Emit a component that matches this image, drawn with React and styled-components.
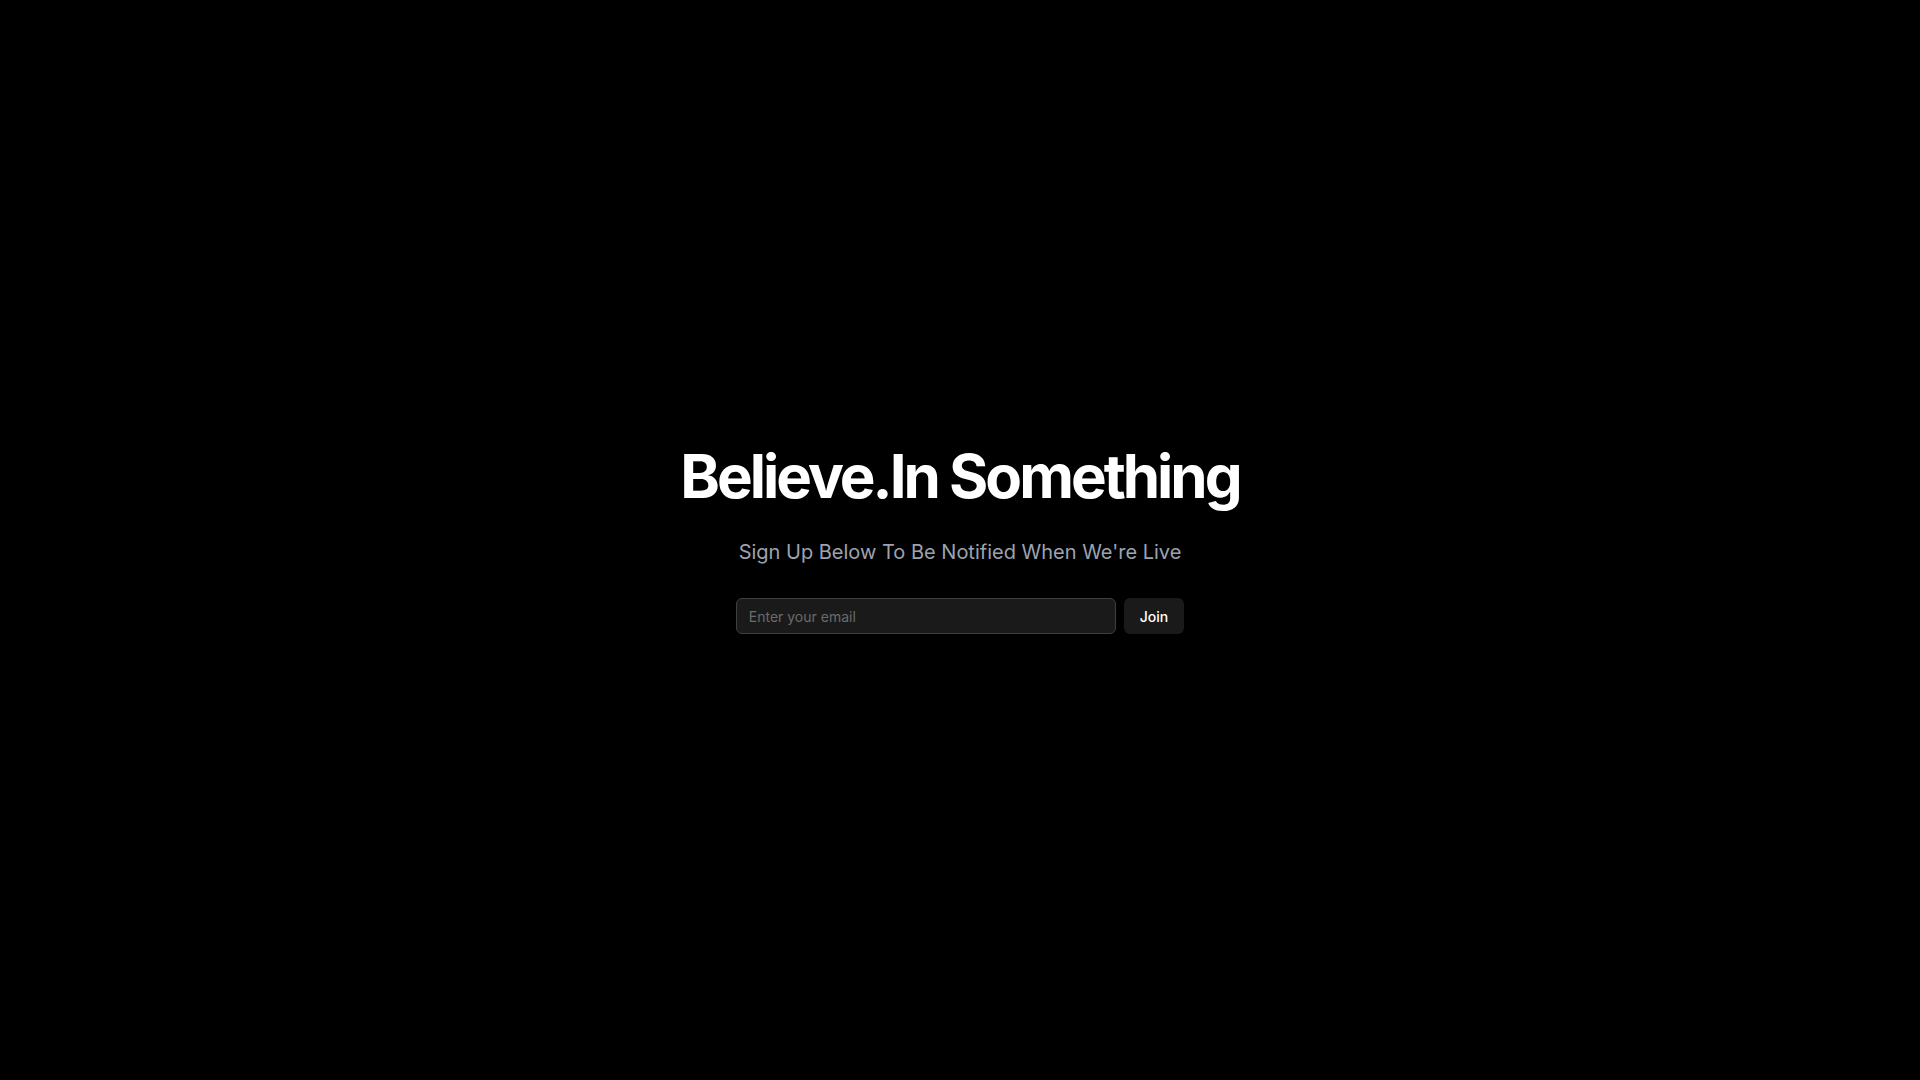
import React from "react";
import styled, { createGlobalStyle } from "styled-components";

const Global = createGlobalStyle`
  html, body { margin: 0; padding: 0; background: #000; }
  body { font-family: Inter, "Noto Sans", sans-serif; color: #fff; }
  * { box-sizing: border-box; }
`;

const Page = styled.main`
  min-height: 100vh;
  display: flex;
  flex-direction: column;
  align-items: center;
  justify-content: center;
  background: #000;
`;

const Title = styled.h1`
  margin: 0;
  font-family: Inter, sans-serif;
  font-size: 60px;
  line-height: 1;
  font-weight: 700;
  letter-spacing: -0.05em;
  color: #fff;
`;

const Subtitle = styled.p`
  margin: 32px 0 0;
  font-family: Inter, sans-serif;
  font-size: 20px;
  line-height: 28px;
  font-weight: 400;
  color: #9ca3af;
`;

const Form = styled.form`
  margin-top: 32px;
  display: flex;
  align-items: center;
  gap: 8px;
`;

const EmailInput = styled.input`
  width: 380px;
  height: 36px;
  padding: 0 12px;
  border: 1px solid #3f3f3f;
  border-radius: 6px;
  background: #1a1a1a;
  color: #fff;
  font-family: Inter, sans-serif;
  font-size: 14px;
  outline: none;
  &::placeholder { color: #6b6b6b; }
`;

const JoinButton = styled.button`
  height: 36px;
  padding: 0 16px;
  border: none;
  border-radius: 6px;
  background: #1a1a1a;
  color: #fff;
  font-family: Inter, sans-serif;
  font-size: 14px;
  font-weight: 500;
  cursor: pointer;
`;

export default function App() {
  return (
    <>
      <Global />
      <Page>
        <Title>Believe.In Something</Title>
        <Subtitle>Sign Up Below To Be Notified When We're Live</Subtitle>
        <Form onSubmit={(e) => e.preventDefault()}>
          <EmailInput type="email" placeholder="Enter your email" />
          <JoinButton type="submit">Join</JoinButton>
        </Form>
      </Page>
    </>
  );
}
